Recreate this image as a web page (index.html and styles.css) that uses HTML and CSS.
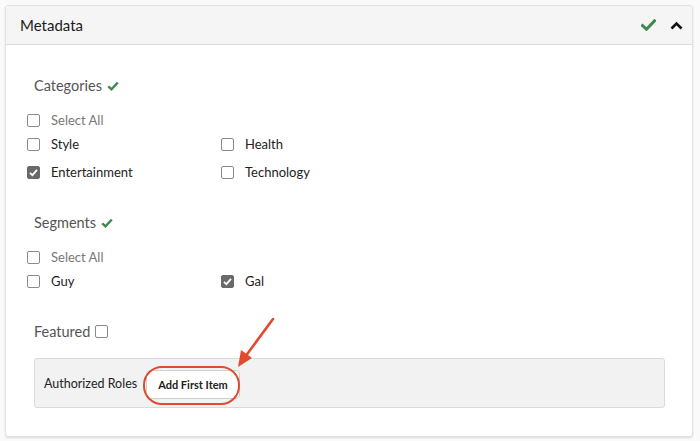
FILE: index.html
```html
<!DOCTYPE html>
<html>
<head>
<meta charset="utf-8">
<link rel="stylesheet" href="styles.css">
</head>
<body>
<div class="panel">
  <div class="panel-head">
    <span class="title">Metadata</span>
    <span class="head-icons">
      <svg class="ok" width="15" height="12" viewBox="0 0 15 12"><path d="M1.5 6.5 L5.5 10.2 L13.5 1.8" fill="none" stroke="#3f8a4a" stroke-width="3" stroke-linecap="square"/></svg>
      <svg class="caret" width="13" height="9" viewBox="0 0 13 9"><path d="M1.5 7.5 L6.5 2.5 L11.5 7.5" fill="none" stroke="#111" stroke-width="2.6"/></svg>
    </span>
  </div>
  <div class="panel-body">
    <div class="group">
      <div class="group-label">Categories <svg class="gcheck" width="12" height="10" viewBox="0 0 12 10"><path d="M1.3 5.3 L4.5 8.3 L10.8 1.5" fill="none" stroke="#3f8a4a" stroke-width="2.4"/></svg></div>
      <div class="options">
        <label class="opt all"><span class="cb"></span>Select All</label>
        <span></span>
        <label class="opt"><span class="cb"></span>Style</label>
        <label class="opt"><span class="cb"></span>Health</label>
        <label class="opt tall"><span class="cb on"><svg width="13" height="13" viewBox="0 0 13 13"><path d="M3 6.8 L5.4 9.2 L10 3.8" fill="none" stroke="#fff" stroke-width="1.8"/></svg></span>Entertainment</label>
        <label class="opt tall"><span class="cb"></span>Technology</label>
      </div>
    </div>
    <div class="group seg">
      <div class="group-label">Segments <svg class="gcheck" width="12" height="10" viewBox="0 0 12 10"><path d="M1.3 5.3 L4.5 8.3 L10.8 1.5" fill="none" stroke="#3f8a4a" stroke-width="2.4"/></svg></div>
      <div class="options">
        <label class="opt all"><span class="cb"></span>Select All</label>
        <span></span>
        <label class="opt"><span class="cb"></span>Guy</label>
        <label class="opt"><span class="cb on"><svg width="13" height="13" viewBox="0 0 13 13"><path d="M3 6.8 L5.4 9.2 L10 3.8" fill="none" stroke="#fff" stroke-width="1.8"/></svg></span>Gal</label>
      </div>
    </div>
    <div class="featured">Featured <span class="cb"></span></div>
    <div class="roles">
      <span class="roles-label">Authorized Roles</span>
      <span class="btn-wrap">
        <button class="btn">Add First Item</button>
        <span class="ring"></span>
        <svg class="arrow" width="50" height="60" viewBox="0 0 50 60"><path d="M42 2 L14 40" stroke="#e04a2e" stroke-width="2.6" stroke-linecap="round" fill="none"/><path d="M7 50 L10 33 L21 41 Z" fill="#e04a2e"/></svg>
      </span>
    </div>
  </div>
</div>
</body>
</html>
```

FILE: styles.css
```css
* { box-sizing: border-box; }
html, body { margin: 0; }
body {
  background: #fafafa;
  font-family: Lato, "Open Sans", sans-serif;
  color: #222;
  padding: 5px 8px 0 5px;
  width: 700px;
  height: 441px;
  overflow: hidden;
}
.panel {
  background: #fff;
  border: 1px solid #e2e2e2;
  border-radius: 3px;
  box-shadow: 0 1px 2px rgba(0,0,0,0.12);
  width: 688px;
  height: 432px;
}
.panel-head {
  height: 39px;
  background: #f5f5f5;
  border-bottom: 1px solid #dcdcdc;
  display: flex;
  align-items: center;
  justify-content: space-between;
  padding: 0 9px 0 14px;
}
.title { font-size: 15px; color: #1c1c1c; }
.head-icons { display: flex; align-items: center; gap: 14px; }
.panel-body { padding: 30px 28px 0 28px; }
.group-label {
  font-size: 14.5px;
  color: #555;
  display: flex;
  align-items: center;
  gap: 5px;
  height: 20px;
}
.group-label .gcheck { margin-top: 1px; }
.options {
  display: grid;
  grid-template-columns: 194px 194px;
  margin-top: 13px;
  margin-left: -7px;
}
.opt {
  display: flex;
  align-items: center;
  height: 24px;
  font-size: 13px;
  color: #222;
}
.opt.tall { height: 28px; padding-top: 4px; }
.opt.all { color: #777; }
.cb {
  width: 13px;
  height: 13px;
  border: 1px solid #8a8a8a;
  border-radius: 2px;
  background: #fff;
  margin-right: 11px;
  display: inline-flex;
  flex: none;
}
.cb.on { background: #6a6a6a; border-color: #6a6a6a; }
.cb.on svg { margin: -1px; }
.seg { margin-top: 28px; }
.featured {
  margin-top: 28px;
  font-size: 14.5px;
  color: #555;
  display: flex;
  align-items: center;
  height: 20px;
}
.featured .cb { margin-left: 5px; margin-top: 1px; }
.roles {
  margin-top: 17px;
  width: 631px;
  height: 50px;
  background: #f2f2f2;
  border: 1px solid #dadada;
  border-radius: 3px;
  display: flex;
  align-items: center;
  padding-left: 9px;
}
.roles-label { font-size: 12.5px; color: #222; }
.btn-wrap { position: relative; margin-left: 9px; display: inline-flex; }
.btn {
  font-family: Lato, "Open Sans", sans-serif;
  font-size: 11px;
  font-weight: 700;
  color: #222;
  background: #fff;
  border: 1px solid #cfcfcf;
  border-radius: 4px;
  height: 29px;
  padding: 0 11px;
  margin-top: 3px;
}
.ring {
  position: absolute;
  left: -3px;
  top: -1px;
  width: 97px;
  height: 39px;
  border: 2px solid #dd4b30;
  border-radius: 19px;
}
.arrow {
  position: absolute;
  left: 85px;
  top: -50px;
}
```
